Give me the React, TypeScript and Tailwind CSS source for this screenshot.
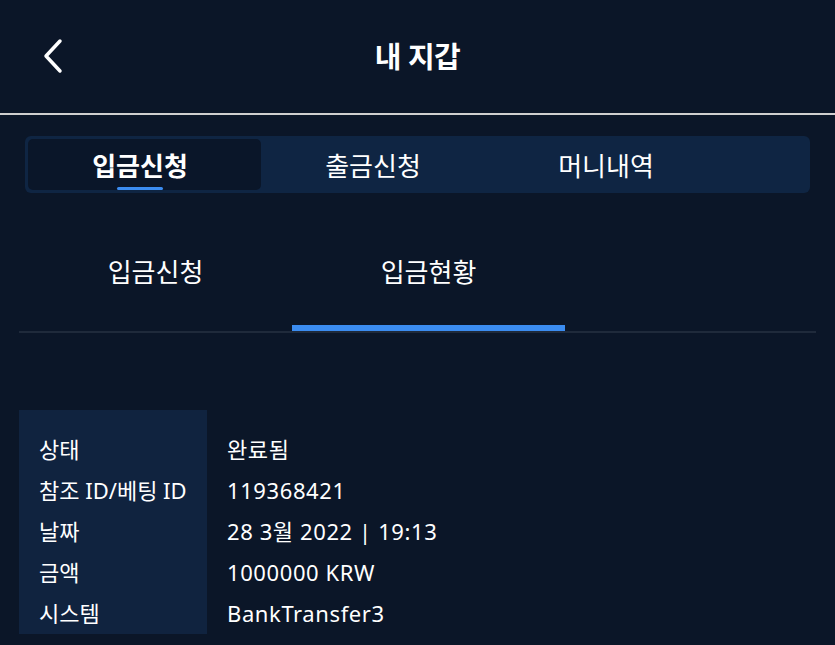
import React, { useState } from 'react';

const font = { fontFamily: '"Noto Sans", "Noto Sans CJK KR", sans-serif' };

const topTabs = ['입금신청', '출금신청', '머니내역'];
const subTabs = ['입금신청', '입금현황'];

const rows = [
  { label: '상태', value: '완료됨' },
  { label: '참조 ID/베팅 ID', value: '119368421' },
  { label: '날짜', value: '28 3월 2022 | 19:13' },
  { label: '금액', value: '1000000 KRW' },
  { label: '시스템', value: 'BankTransfer3' },
];

const App: React.FC = () => {
  const [tab, setTab] = useState(0);
  const [sub, setSub] = useState(1);

  return (
    <div className="w-[835px] h-[645px] overflow-hidden bg-[#0b1628] text-white" style={font}>
      {/* header */}
      <div className="relative h-[115px] flex items-center justify-center border-b-2 border-[#cfcfcf]">
        <button className="absolute left-[36px] top-[34px] p-1">
          <svg width="24" height="36" viewBox="0 0 24 36" fill="none">
            <path d="M20 3 L6 18 L20 33" stroke="white" strokeWidth="3.5" strokeLinecap="round" strokeLinejoin="round" />
          </svg>
        </button>
        <h1 className="text-[29px] font-bold leading-none tracking-[-0.5px]">내 지갑</h1>
      </div>

      {/* top tabs */}
      <div className="mx-[25px] mt-[21px] h-[57px] rounded-[6px] bg-[#0f2543] p-[3px] flex">
        {topTabs.map((t, i) => (
          <button
            key={t}
            onClick={() => setTab(i)}
            className={`relative w-[233px] h-[51px] rounded-[5px] flex items-center justify-center pr-[9px] text-[26px] leading-none ${
              tab === i ? 'bg-[#0a1629] font-bold' : 'font-normal'
            }`}
          >
            <span className="mt-[2px]">{t}</span>
            {tab === i && (
              <span className="absolute bottom-[0px] left-[89px] w-[46px] h-[3px] rounded-full bg-[#3b8cf0]" />
            )}
          </button>
        ))}
      </div>

      {/* sub tabs */}
      <div className="mx-[19px] mt-[39px] flex border-b-2 border-[#1f2a3b]">
        {subTabs.map((t, i) => (
          <button
            key={t}
            onClick={() => setSub(i)}
            className="relative w-[273px] h-[99px] flex items-start justify-center pt-[27px] text-[26px] leading-none"
          >
            <span>{t}</span>
            {sub === i && <span className="absolute left-0 right-0 bottom-0 h-[6px] bg-[#3b8cf0]" />}
          </button>
        ))}
      </div>

      {/* details */}
      <div className="mx-[19px] mt-[77px] flex text-[22px] leading-none">
        <div className="w-[188px] h-[224px] bg-[#10233f] pt-[18px] pl-[20px]">
          {rows.map((r) => (
            <div key={r.label} className="h-[41px] flex items-center whitespace-nowrap">
              {r.label}
            </div>
          ))}
        </div>
        <div className="pt-[18px] pl-[20px] tracking-[0.6px]">
          {rows.map((r) => (
            <div key={r.label} className="h-[41px] flex items-center whitespace-nowrap">
              {r.value}
            </div>
          ))}
        </div>
      </div>
    </div>
  );
};

export default App;
